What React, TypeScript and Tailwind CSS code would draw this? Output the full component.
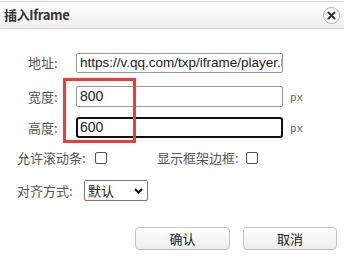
import React from "react";

const cjk = "font-['Microsoft_YaHei','Noto_Sans_CJK_SC',sans-serif]";

function Checkbox() {
    return <div className="w-[12px] h-[12px] border border-[#555] rounded-[2px] bg-white" />;
}

export default function App() {
    return (
        <div className={`relative w-[344px] h-[261px] bg-white overflow-hidden ${cjk}`}>
            {/* ── Title bar ── */}
            <div className="mt-px h-[28px] border-t border-b border-[#d4d4d4] bg-gradient-to-b from-white to-[#eeeeee] flex items-center justify-between pl-[4px] pr-[4px]">
                <span className="text-[13px] font-bold text-[#333] tracking-tight">插入Iframe</span>
                <div className="w-[17px] h-[17px] rounded-full border border-[#b5b5b5] bg-white flex items-center justify-center">
                    <svg width="9" height="9" viewBox="0 0 9 9">
                        <path d="M1.5 1.5 L7.5 7.5 M7.5 1.5 L1.5 7.5" stroke="#333" strokeWidth="2" strokeLinecap="round" />
                    </svg>
                </div>
            </div>

            {/* ── Form ── */}
            <div className="pt-[24px] pl-[28px]">
                <div className="flex items-center h-[20px]">
                    <span className="w-[48px] text-[13px] text-[#555]">地址:</span>
                    <input
                        readOnly
                        value="https://v.qq.com/txp/iframe/player.html?vid=x0031"
                        className="w-[207px] h-[20px] border border-[#999] rounded-[2px] pl-[3px] text-[13.5px] text-[#222] font-['Liberation_Sans',Arial,sans-serif] outline-none"
                    />
                </div>
                <div className="flex items-center h-[21px] mt-[13px]">
                    <span className="w-[48px] text-[13px] text-[#555]">宽度:</span>
                    <input
                        readOnly
                        value="800"
                        className="w-[207px] h-[21px] border border-[#999] rounded-[2px] pl-[3px] text-[14px] text-[#222] font-['Liberation_Sans',Arial,sans-serif] outline-none"
                    />
                    <span className="ml-[7px] mt-[3px] text-[11px] text-[#666] font-['Liberation_Mono',monospace]">px</span>
                </div>
                <div className="flex items-center h-[21px] mt-[10px]">
                    <span className="w-[48px] text-[13px] text-[#555]">高度:</span>
                    <input
                        readOnly
                        value="600"
                        className="w-[207px] h-[21px] border-2 border-[#111] rounded-[3px] pl-[2px] text-[14px] text-[#222] font-['Liberation_Sans',Arial,sans-serif] outline-none"
                    />
                    <span className="ml-[7px] mt-[3px] text-[11px] text-[#666] font-['Liberation_Mono',monospace]">px</span>
                </div>
            </div>

            <div className="pl-[17px] mt-[12px] flex items-center h-[16px]">
                <span className="w-[78px] text-[13px] text-[#555]">允许滚动条:</span>
                <Checkbox />
                <span className="ml-[50px] w-[89px] text-[13px] text-[#555]">显示框架边框:</span>
                <Checkbox />
            </div>

            <div className="pl-[17px] mt-[14px] flex items-center h-[21px]">
                <span className="w-[67px] text-[13px] text-[#555]">对齐方式:</span>
                <div className="w-[64px] h-[21px] border border-[#777] rounded-[2px] flex items-center justify-between pl-[3px] pr-[4px]">
                    <span className="text-[13px] text-[#222]">默认</span>
                    <svg width="9" height="6" viewBox="0 0 9 6">
                        <path d="M1 1 L4.5 4.5 L8 1" stroke="#111" strokeWidth="2" fill="none" />
                    </svg>
                </div>
            </div>

            {/* ── Buttons ── */}
            <div className="mt-[26px] flex gap-[13px] pl-[135px]">
                <button className="w-[95px] h-[23px] border border-[#c4c4c4] rounded-[4px] bg-gradient-to-b from-white to-[#ececec] text-[13px] text-[#222]">确认</button>
                <button className="w-[94px] h-[23px] border border-[#c4c4c4] rounded-[4px] bg-gradient-to-b from-white to-[#ececec] text-[13px] text-[#222]">取消</button>
            </div>

            {/* annotation box */}
            <div className="absolute left-[63px] top-[78px] w-[73px] h-[65px] border-[3px] border-[#ef3b3b]" />
        </div>
    );
}
